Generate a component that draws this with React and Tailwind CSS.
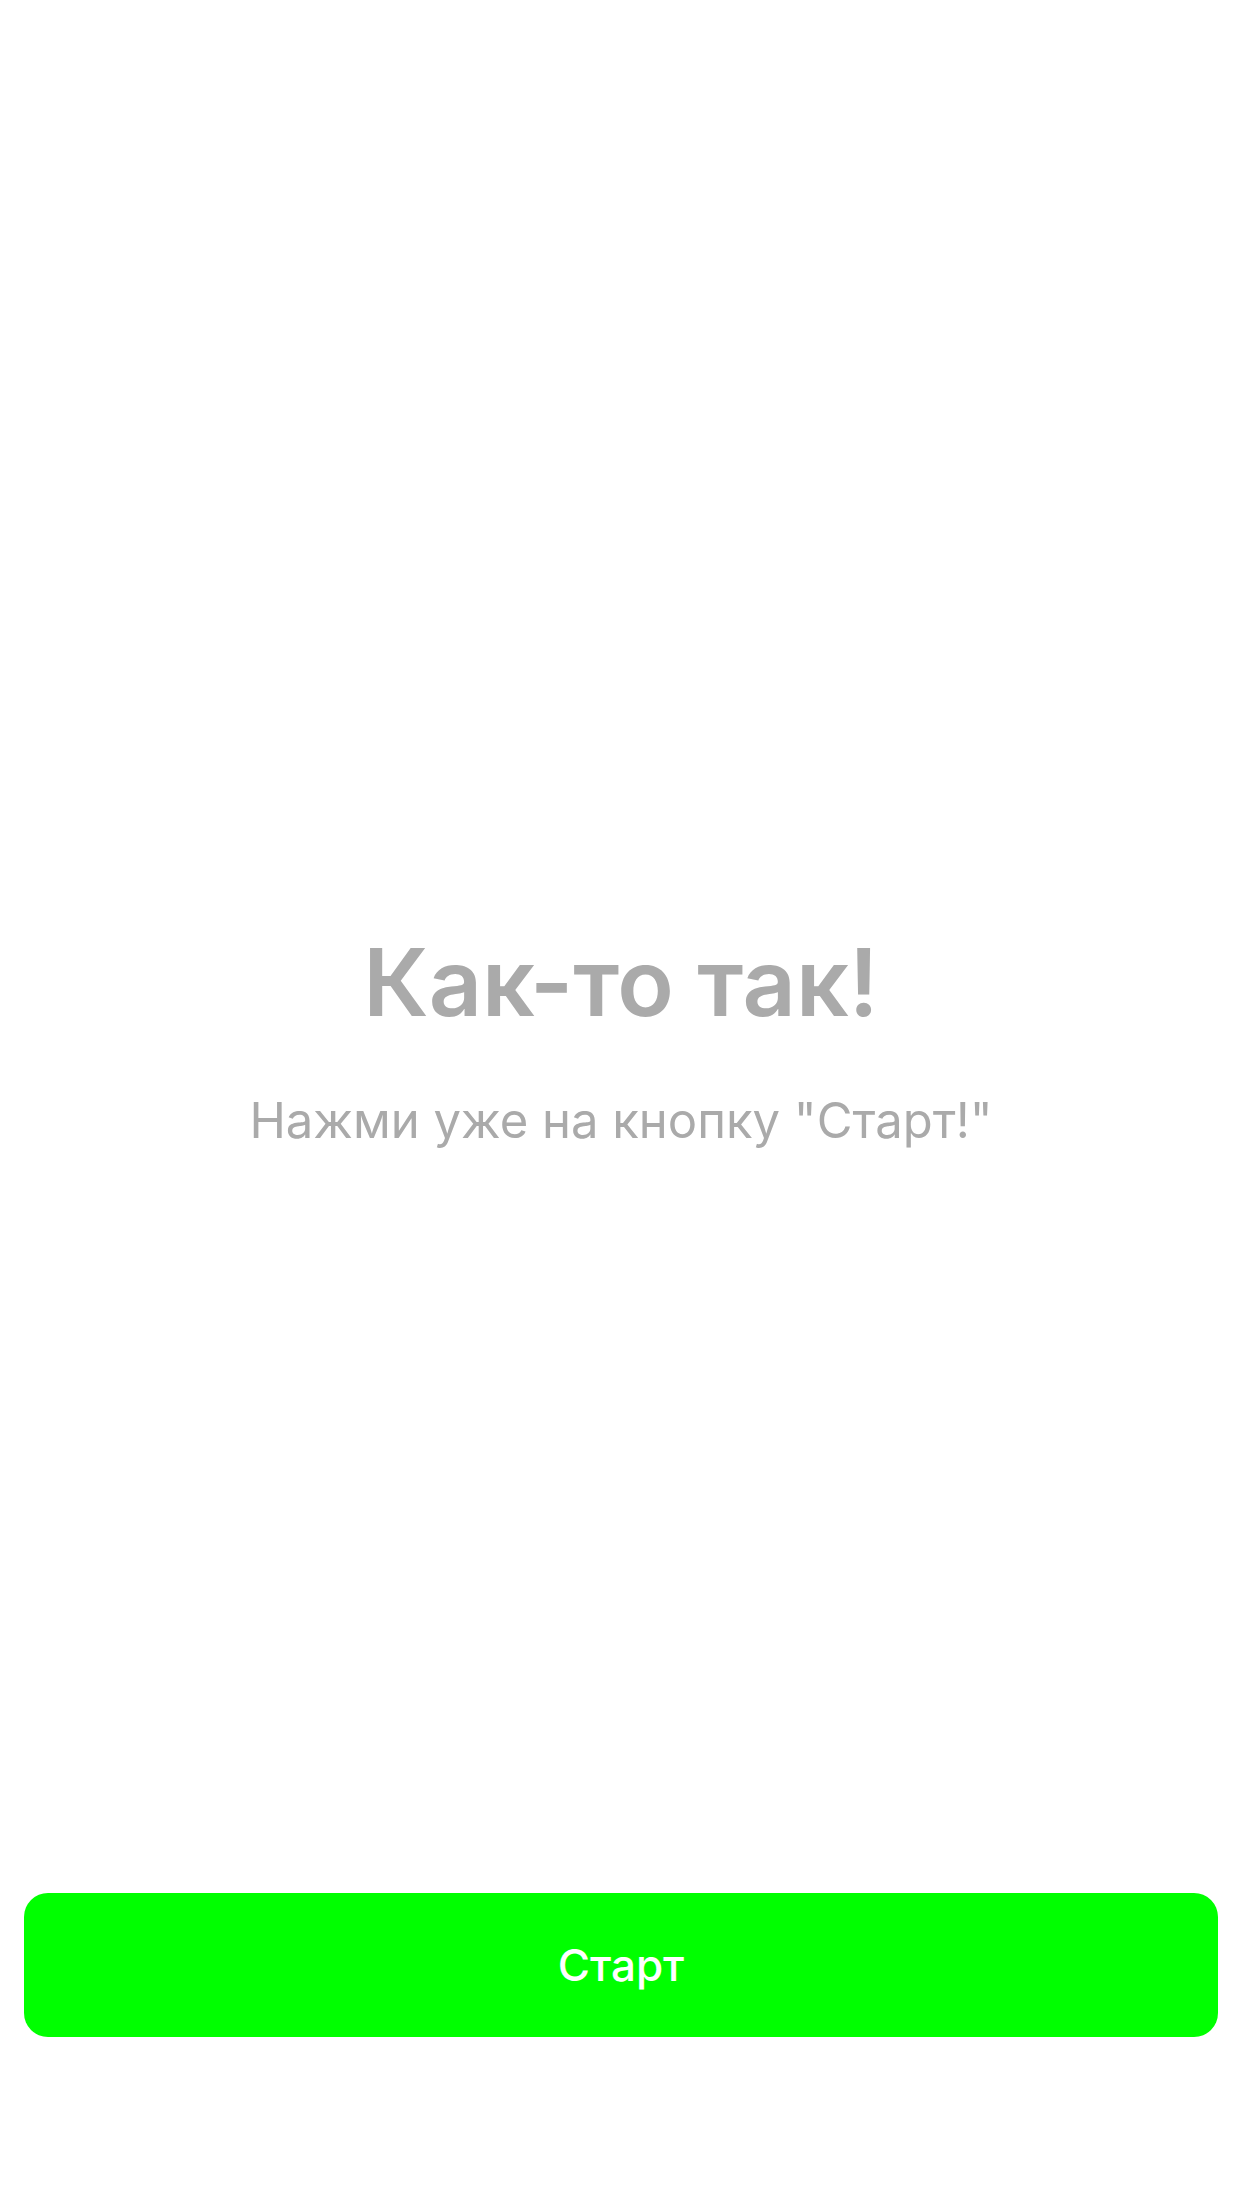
export default function App() {
  return (
    <main className="flex min-h-screen flex-col bg-white px-6 pb-[171px] font-['Inter',sans-serif]">
      <section className="flex flex-1 flex-col items-center justify-center gap-[52px] pt-[183px] text-center text-[#aaaaaa]">
        <h1 className="text-[93px] leading-[114px] font-semibold">Как-то так!</h1>
        <p className="text-[49px] leading-[60px]">Нажми уже на кнопку "Старт!"</p>
      </section>
      <button type="button" className="h-36 w-full rounded-3xl bg-[#00ff00] text-[44px] font-medium text-white">
        Старт
      </button>
    </main>
  );
}
